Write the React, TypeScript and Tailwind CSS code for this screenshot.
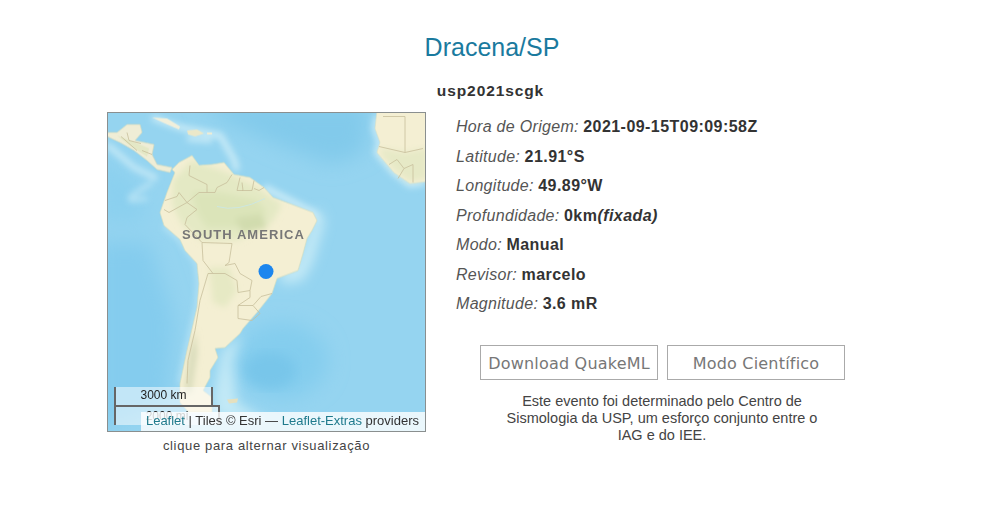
const fields: { label: string; value: React.ReactNode }[] = [
  { label: 'Hora de Origem:', value: '2021-09-15T09:09:58Z' },
  { label: 'Latitude:', value: '21.91°S' },
  { label: 'Longitude:', value: '49.89°W' },
  { label: 'Profundidade:', value: <>0km<i>(fixada)</i></> },
  { label: 'Modo:', value: 'Manual' },
  { label: 'Revisor:', value: 'marcelo' },
  { label: 'Magnitude:', value: '3.6 mR' },
];

const coast =
  'M65 57 L72 50 L85 43 L92 53 L105 52 L117 50 L127 62 L143 65 L157 75 L166 85 L185 92 L206 100 L210 108 L205 118 L200 126 L196 141 L191 158 L170 166 L165 181 L150 200 L136 216 L133 221 L118 235 L108 236 L111 245 L103 258 L103 265 L96 278 L105 285 L105 300 L82 300 L73 290 L73 271 L80 238 L90 195 L92 171 L90 151 L78 138 L73 127 L57 113 L53 100 L60 80 L68 60Z';

const MapArt = () => (
  <svg viewBox="0 0 317 317" className="absolute inset-0 h-full w-full">
    <defs>
      <filter id="soft"><feGaussianBlur stdDeviation="0.45" /></filter>
      <filter id="blur2"><feGaussianBlur stdDeviation="3" /></filter>
      <filter id="blur4"><feGaussianBlur stdDeviation="3" /></filter>
      <filter id="blur6"><feGaussianBlur stdDeviation="6" /></filter>
      <filter id="blur8"><feGaussianBlur stdDeviation="10" /></filter>
      <clipPath id="land"><path d={coast} /></clipPath>
    </defs>
    <g transform="translate(-1 -1)">
      <rect x="0" y="0" width="320" height="320" fill="#95d4f0" />
      {/* ocean depth */}
      <g filter="url(#blur8)">
        <path d="M90 -10 H262 L258 40 L225 52 L175 34 L125 12Z" fill="#82caeb" />
        <path d="M-10 130 L42 130 L68 210 L60 290 L-10 317Z" fill="#84ccee" />
        <path d="M-10 40 L30 70 L40 110 L-10 110Z" fill="#8bd0ef" />
        <ellipse cx="175" cy="248" rx="46" ry="38" fill="#84cdee" />
      </g>
      <ellipse cx="163" cy="258" rx="26" ry="18" fill="#78c6ea" filter="url(#blur6)" />
      {/* shelf around the land */}
      <g filter="url(#blur6)" fill="#c2e9f6" stroke="none">
        <path d="M135 222 L115 238 L106 285 L110 305 L165 312 L130 290 L125 250Z" />
        <path d="M210 95 L218 108 L206 150 L196 168 L176 172 L172 160 L190 150Z" />
      </g>
      <g filter="url(#blur4)" fill="none" stroke="#c9ebf7">
        <path d="M157 75 L206 100 L210 108" strokeWidth="7" />
        <path d="M57 113 L73 127 L90 151 L92 171 L90 195 L80 238 L73 271" strokeWidth="3" />
        <path d="M45 5 L73 15 L113 23 L127 47 L130 58" strokeWidth="6" />
        <path d="M80 26 L105 28" strokeWidth="5" />
        <path d="M270 3 L268 16 L273 30 L270 40 L287 60 L303 72 L318 70" strokeWidth="6" />
        <path d="M0 32 L27 55 L50 66" strokeWidth="5" />
        <path d="M22 85 L45 70 M22 88 L40 86" strokeWidth="3" />
      </g>
      {/* land */}
      <g filter="url(#soft)">
        <path d={coast} fill="#f4efd3" stroke="#d3dcc0" strokeWidth="0.7" />
        <g clipPath="url(#land)">
          <g filter="url(#blur2)">
            <path d="M66 68 L85 48 L120 60 L150 75 L175 92 L165 110 L130 128 L95 128 L75 112 L65 92Z" fill="#e4e9c4" />
            <path d="M85 80 L112 80 L150 88 L160 100 L130 115 L100 115 L90 100Z" fill="#dbe4b9" />
            <path d="M128 106 L155 102 L160 116 L135 120Z" fill="#d1dcae" />
            <path d="M102 155 L122 155 L130 178 L118 195 L106 190Z" fill="#e6e9c4" />
            <path d="M78 280 L83 240 L88 218 L90 240 L84 280Z" fill="#d5d9b8" />
          </g>
        </g>
        {/* Central America */}
        <path d="M-2 20 L10 20 L20 12 L33 12 L35 20 L28 28 L47 32 L45 42 L50 52 L65 55 L63 60 L50 57 L40 48 L27 38 L13 30 L-2 23Z" fill="#efedd6" stroke="#d3d9bb" strokeWidth="0.6" />
        <path d="M10 23 L28 30 L42 36 L40 44 L24 34Z" fill="#e4e8c6" />
        {/* Caribbean islands */}
        <path d="M45 5 L60 6 L73 14 L72 17 L58 11Z" fill="#f1efdb" />
        <path d="M80 18 L90 17 L97 21 L88 24 L81 22Z" fill="#ebe8c9" />
        <path d="M100 20 L105 20 L105 22 L100 22Z" fill="#efecd5" />
        {/* Africa */}
        <path d="M270 -2 H320 V69 L303 71 L287 60 L270 40 L273 30 L268 16Z" fill="#f4efd3" stroke="#d6dfc6" strokeWidth="0.6" />
        <path d="M274 36 L298 40 L320 36 V66 L303 69 L288 58 L273 40Z" fill="#e6e9c6" filter="url(#blur2)" />
      </g>
      {/* country borders */}
      <g fill="none" stroke="#c8bf9c" strokeWidth="0.8">
        <path d="M83 53 L82 63 L100 72 L100 80 L108 80 L110 75 L120 70 L125 62" />
        <path d="M133 65 L130 78 L136 78 L135 70 M135 78 L145 78 L147 68 M147 76 L152 78 L157 75" />
        <path d="M58 88 L70 84 L72 80 L80 90 L62 100 L57 97 M80 90 L92 80 L100 80" />
        <path d="M80 90 L90 97 L80 105 L78 112 L95 130" />
        <path d="M95 130 L125 131 L122 150 L118 153 L128 151 L133 161 L145 168 L143 178 L131 180 L130 168 L118 161 L106 161 L96 148 Z" />
        <path d="M106 161 L101 161 L93 188 L88 218 L81 248 L80 271" />
        <path d="M131 193 L146 193 L153 201 L145 208 L131 206Z M143 178 L143 185 L131 193 M146 193 L154 184 L165 181" />
        <path d="M272 34 L298 40 L316 36 M276 4 H298 V40 M282 52 L290 47 L297 56 L306 52 L306 70 M297 56 L291 66" />
        <path d="M20 20 L22 28 L34 31 M14 24 L30 38 M45 42 L35 38" />
      </g>
      <path d="M120 287 L131 286 L130 290 L122 291Z" fill="#e5e0bf" filter="url(#soft)" />
      <path d="M110 94 Q130 100 158 86" fill="none" stroke="#cbe6e4" strokeWidth="0.9" />
      <circle cx="159" cy="159" r="7.5" fill="#1c86ee" />
    </g>
  </svg>
);

export default function App() {
  return (
    <div className="h-[525px] w-[984px] overflow-hidden bg-white font-['Liberation_Sans',Arial,sans-serif] text-[#333]">
      <h1 className="pt-[33px] text-center text-[25px] leading-[28px] text-[#1a7a9e]">Dracena/SP</h1>
      <h2 className="mt-[21px] pr-[3px] text-center text-[15.5px] font-bold leading-[18px] tracking-[0.9px]">usp2021scgk</h2>
      <div className="mt-[12px] flex pl-[107px]">
        <div className="w-[319px]">
          <div className="relative h-[320px] w-[319px] overflow-hidden border border-[#8a8f8f]">
            <MapArt />
            <div className="absolute left-[74px] top-[114px] whitespace-nowrap text-[13px] font-bold leading-[16px] tracking-[1.05px] text-[#777]">SOUTH AMERICA</div>
            <div className="absolute left-[6px] top-[274px]">
              <div className="h-[20px] w-[99px] border-x-2 border-b-2 border-[#666] bg-white/50 text-center text-[12px] leading-[16px] text-[#222]">3000 km</div>
              <div className="-mt-[2px] h-[20px] w-[106px] border-x-2 border-t-2 border-[#666] bg-white/50 text-center text-[12px] leading-[18px] text-[#222]">2000 mi</div>
            </div>
            <div className="absolute bottom-0 right-0 h-[19px] whitespace-nowrap bg-white/80 pl-[5px] pr-[6px] text-[13px] leading-[18px] text-[#333]">
              <span className="text-[#1f7a8c]">Leaflet</span> | Tiles © Esri — <span className="text-[#1f7a8c]">Leaflet-Extras</span> providers
            </div>
          </div>
          <p className="mt-[6px] text-center text-[13px] leading-[16px] tracking-[0.65px] text-[#444]">clique para alternar visualização</p>
        </div>
        <div className="ml-[30px] w-[392px]">
          <ul className="pt-[1px]">
            {fields.map(f => (
              <li key={f.label} className="h-[29.5px] text-[16px] leading-[27px]">
                <i className="tracking-[0.3px] text-[#555]">{f.label}</i> <b className="tracking-[0.45px]">{f.value}</b>
              </li>
            ))}
          </ul>
          <div className="ml-[24px] mt-[25px] flex gap-[9px]">
            <button className="h-[35px] w-[178px] border border-[#aaa] font-['DejaVu_Sans',sans-serif] text-[16px] leading-[35px] tracking-[0.2px] text-[#777]">Download QuakeML</button>
            <button className="h-[35px] w-[178px] border border-[#aaa] font-['DejaVu_Sans',sans-serif] text-[16px] leading-[35px] tracking-[0.2px] text-[#777]">Modo Científico</button>
          </div>
          <p className="ml-[44px] mt-[13px] w-[324px] text-center text-[14.5px] leading-[17px] text-[#444]">
            Este evento foi determinado pelo Centro de Sismologia da USP, um esforço conjunto entre o IAG e do IEE.
          </p>
        </div>
      </div>
    </div>
  );
}
